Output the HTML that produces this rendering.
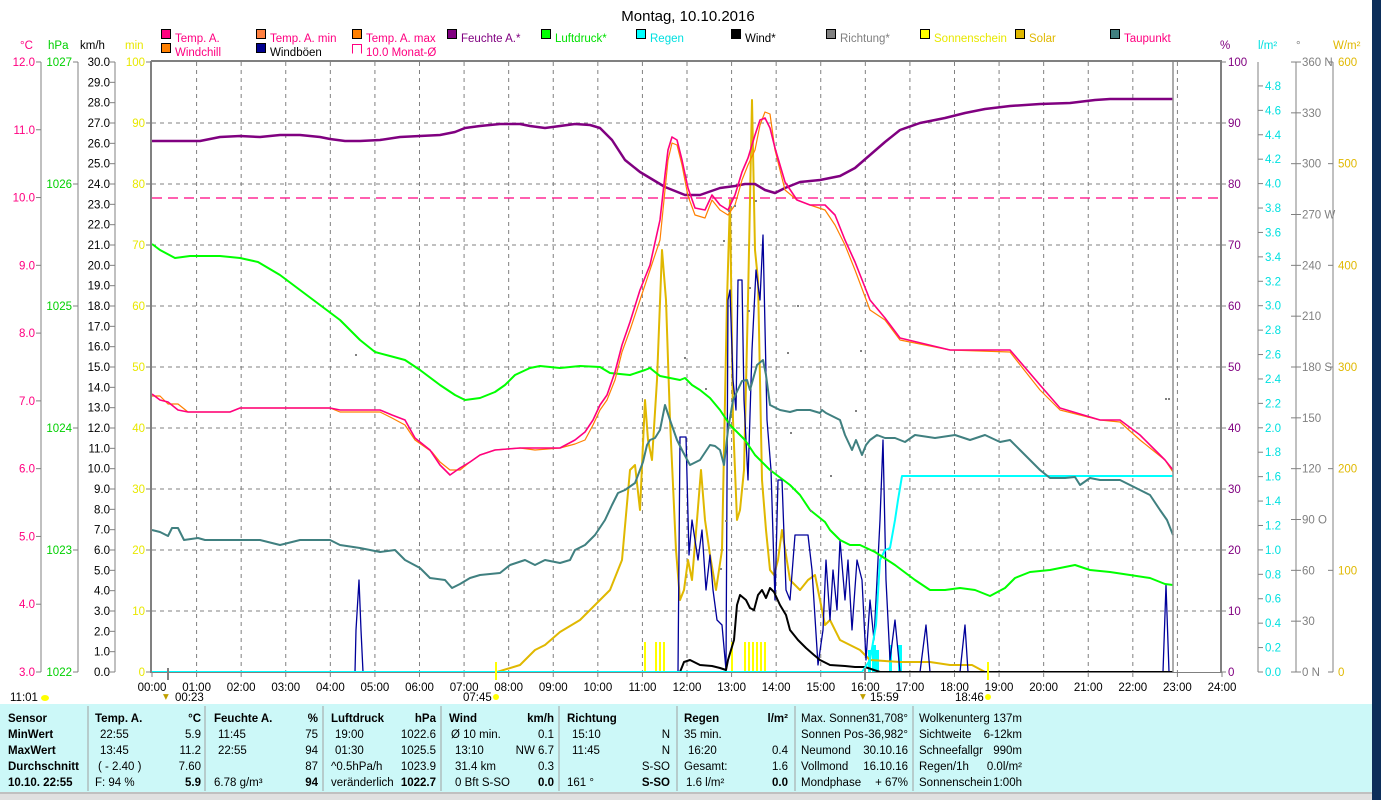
<!DOCTYPE html>
<html><head><meta charset="utf-8">
<style>
html,body{margin:0;padding:0;background:#fff;width:1381px;height:800px;overflow:hidden;font-family:"Liberation Sans",sans-serif}
svg{position:absolute;left:0;top:0}
text{font-family:"Liberation Sans",sans-serif;font-size:11.5px;white-space:pre}
</style></head><body>
<svg id="s" width="1381" height="800" xmlns="http://www.w3.org/2000/svg">
<rect x="0" y="0" width="1381" height="800" fill="#fff"/>
<g id="grid"></g>
<g id="axes"></g>
<text x="688" y="21" text-anchor="middle" style="font-size:15px">Montag, 10.10.2016</text>
<g id="leg"></g>
<line x1="152" y1="198" x2="1222" y2="198" stroke="#ff0080" stroke-width="1.3" stroke-dasharray="10,6"/>
<g fill="#ffff00">
<rect x="644" y="642" width="2" height="30"/><rect x="655" y="642" width="2" height="30"/><rect x="659" y="642" width="2" height="30"/><rect x="663" y="642" width="2" height="30"/>
<rect x="731" y="642" width="2" height="30"/><rect x="744" y="642" width="2" height="30"/><rect x="748" y="642" width="2" height="30"/><rect x="752" y="642" width="2" height="30"/><rect x="756" y="642" width="2" height="30"/><rect x="760" y="642" width="2" height="30"/><rect x="764" y="642" width="2" height="30"/>
</g>
<g fill="#00ffff">
<rect x="868" y="650" width="3" height="22"/><rect x="872" y="645" width="4" height="27"/><rect x="876" y="650" width="3" height="22"/><rect x="889" y="645" width="3" height="27"/><rect x="898" y="645" width="4" height="27"/>
</g>
<g fill="none" stroke-linejoin="round">
<polyline stroke="#e0b800" stroke-width="2" points="152,672 497,672 520,665 535,650 545,645 560,632 580,620 595,605 610,590 622,560 630,470 635,465 640,510 645,400 648,440 652,460 657,380 662,250 666,300 670,420 676,550 680,600 684,590 688,560 692,580 697,520 701,470 705,520 710,555 716,590 722,550 727,300 730,200 733,420 737,520 740,510 744,470 748,300 752,100 755,250 758,280 762,480 766,530 770,570 774,575 778,560 782,530 790,580 800,590 808,580 815,575 820,600 825,625 830,620 840,640 850,645 860,650 870,660 885,661 900,662 930,662 950,665 972,665 985,672 990,672"/>
<polyline stroke="#00009a" stroke-width="1.3" points="152,672 355,672 356,630 359,580 361,630 363,672 678,672 680,437 686,437 689,555 692,520 698,560 702,530 706,590 710,555 713,590 717,620 722,625 726,670 728,300 730,290 733,380 736,410 738,280 742,280 744,400 748,480 752,350 756,270 760,300 763,235 767,420 771,470 775,600 778,480 782,480 786,590 790,600 795,535 808,535 812,570 818,665 823,630 826,560 830,620 833,570 837,610 840,540 845,600 848,560 852,630 857,560 862,580 866,660 870,600 874,640 880,520 883,440 886,580 890,660 895,620 900,672 920,672 926,625 930,672 960,672 965,625 968,672 1163,672 1166,585 1169,672 1173,672"/>
<polyline stroke="#000" stroke-width="2" points="152,672 680,672 684,662 690,660 700,665 712,666 720,668 726,670 728,660 734,640 737,605 740,595 746,600 750,608 754,610 758,595 762,590 766,598 770,588 774,592 780,605 786,615 790,630 798,640 806,648 814,655 820,660 830,665 845,666 855,667 865,667 880,672 1173,672"/>
<polyline stroke="#00ffff" stroke-width="2" points="152,672 862,672 870,660 876,625 880,560 885,550 890,548 895,520 898,500 902,476 1173,476"/>
<polyline stroke="#00ff00" stroke-width="2" points="152,244 160,250 175,258 190,256 220,256 240,258 258,262 280,275 300,290 320,305 340,320 360,340 375,352 390,356 405,360 420,370 440,385 455,395 465,400 480,398 495,392 505,385 515,375 530,368 540,366 560,368 580,366 600,367 610,373 630,375 645,370 650,368 660,376 680,380 685,378 692,385 700,390 710,398 720,410 730,425 745,440 755,455 770,470 790,485 800,495 810,510 825,522 830,530 840,540 850,545 860,545 875,552 895,565 915,580 930,590 945,590 960,588 975,590 990,596 1005,588 1015,578 1030,572 1050,570 1060,568 1075,565 1090,570 1110,572 1130,575 1150,578 1165,584 1173,585"/>
<polyline stroke="#408080" stroke-width="2" points="152,530 160,532 168,536 172,528 178,528 184,540 198,538 205,540 230,540 260,540 280,545 300,540 320,540 330,540 340,545 360,548 380,552 395,550 405,560 420,568 430,578 445,580 452,588 460,584 470,578 480,575 500,573 510,565 525,560 535,565 545,560 560,563 570,560 575,550 585,545 595,535 605,520 612,505 618,493 625,490 635,483 643,462 647,445 650,440 655,438 660,430 665,405 670,420 677,440 683,452 690,465 700,460 710,445 715,446 720,450 724,465 728,430 733,400 742,381 747,380 750,390 757,365 763,360 766,375 770,405 780,410 790,412 797,410 810,410 820,413 822,410 826,413 840,420 845,435 852,450 856,440 862,455 866,445 870,440 877,435 885,438 895,438 905,442 915,435 935,438 955,435 970,440 985,435 1000,442 1010,440 1020,450 1030,460 1040,470 1050,478 1065,478 1075,477 1080,485 1090,478 1100,480 1120,480 1130,485 1140,490 1150,495 1160,510 1167,520 1173,535"/>
<polyline stroke="#800080" stroke-width="2.5" points="152,141 200,141 220,137 240,136 260,137 280,135 300,135 320,137 330,139 345,141 360,141 380,140 400,137 420,136 440,135 455,132 465,128 480,126 500,124 520,124 530,126 545,128 560,126 575,124 590,125 600,128 612,140 625,160 640,172 655,181 665,187 685,195 700,195 720,188 735,186 745,184 755,184 765,190 775,193 785,188 800,182 820,180 840,176 855,168 870,155 885,142 900,130 920,123 945,118 965,113 985,109 1010,106 1040,104 1070,103 1095,100 1110,99 1173,99"/>
<polyline stroke="#ff8000" stroke-width="1.2" points="152,396 160,396 168,404 178,404 188,412 230,412 240,408 280,408 330,408 340,412 380,412 392,418 405,425 415,440 432,452 440,462 450,470 460,470 470,462 480,455 495,450 520,448 535,450 560,448 575,444 585,440 593,425 600,410 607,400 615,380 622,352 630,330 640,300 650,270 660,240 665,190 668,160 672,143 677,145 682,165 688,196 695,215 705,218 712,200 720,210 728,215 735,205 742,180 748,165 755,150 760,125 765,112 770,114 775,150 785,190 797,200 810,205 825,210 835,225 845,245 855,270 870,310 885,320 900,340 950,350 1010,352 1040,390 1060,410 1100,420 1120,422 1140,440 1155,452 1165,460 1173,472"/>
<polyline stroke="#ff0080" stroke-width="1.6" points="152,394 160,400 168,402 178,410 188,412 230,412 240,408 280,408 330,408 340,410 380,410 392,415 405,420 415,438 430,450 440,465 450,475 460,468 470,462 480,455 495,450 520,448 535,448 560,448 575,440 585,432 593,420 600,405 607,395 615,372 622,345 630,322 640,290 650,265 660,220 665,175 668,150 672,137 677,140 682,160 688,188 695,208 705,210 712,195 720,205 728,210 735,195 742,172 748,158 755,135 760,120 765,118 770,128 775,148 785,182 797,200 810,205 825,205 835,215 845,240 855,262 870,300 885,318 900,338 950,350 1010,350 1040,385 1060,408 1100,420 1120,420 1140,435 1155,450 1165,460 1173,470"/>
</g>
<g fill="#808080" id="dots"></g>
<line x1="1173" y1="62" x2="1173" y2="672" stroke="#909090" stroke-width="1.5"/>
<line x1="151" y1="61" x2="1222" y2="61" stroke="#808080" stroke-width="2"/>
<line x1="151" y1="61" x2="151" y2="673" stroke="#808080" stroke-width="2"/>
<line x1="1221" y1="61" x2="1221" y2="673" stroke="#808080" stroke-width="2"/>
<line x1="151" y1="672.5" x2="1222" y2="672.5" stroke="#808080" stroke-width="1"/>
<line x1="168" y1="668" x2="168" y2="680" stroke="#808080" stroke-width="2"/>
<line x1="865" y1="668" x2="865" y2="680" stroke="#808080" stroke-width="2"/>
<line x1="496" y1="662" x2="496" y2="680" stroke="#ffff00" stroke-width="2"/>
<line x1="988" y1="662" x2="988" y2="680" stroke="#ffff00" stroke-width="2"/>
<text x="10" y="701">11:01</text><ellipse cx="45" cy="698" rx="4" ry="3" fill="#ffff00"/>
<text x="175" y="701">00:23</text><text x="163" y="700" fill="#c0a000">▾</text>
<text x="463" y="701">07:45</text><circle cx="496" cy="697" r="3" fill="#ffff00"/>
<text x="870" y="701">15:59</text><text x="860" y="700" fill="#c0a000">▾</text>
<text x="955" y="701">18:46</text><circle cx="988" cy="697" r="3" fill="#ffff00"/>
<rect x="0" y="704" width="1372" height="88" fill="#ccf8f8"/>
<g stroke="#a0a0a0" stroke-width="1">
<line x1="88" y1="706" x2="88" y2="791"/><line x1="205" y1="706" x2="205" y2="791"/><line x1="323" y1="706" x2="323" y2="791"/><line x1="441" y1="706" x2="441" y2="791"/><line x1="559" y1="706" x2="559" y2="791"/><line x1="677" y1="706" x2="677" y2="791"/><line x1="795" y1="706" x2="795" y2="791"/><line x1="913" y1="706" x2="913" y2="791"/>
</g>
<rect x="0" y="792" width="1372" height="8" fill="#e0e0e0"/>
<line x1="0" y1="793" x2="1372" y2="793" stroke="#a0a0a0"/>
<rect x="1372" y="0" width="9" height="800" fill="#0c2e5a"/>
<g id="tbl"></g>
</svg>
<script>
const NS="http://www.w3.org/2000/svg";
function el(p,t,a,tx){const e=document.createElementNS(NS,t);for(const k in a)e.setAttribute(k,a[k]);if(tx!==undefined)e.textContent=tx;document.getElementById(p).appendChild(e);return e;}
const X=h=>152+44.583*h;
for(let h=1;h<24;h++){el('grid','line',{x1:X(h),y1:62,x2:X(h),y2:672,stroke:'#808080','stroke-dasharray':'4,4'});}
for(let k=1;k<10;k++){el('grid','line',{x1:152,y1:62+61*k,x2:1221,y2:62+61*k,stroke:'#808080','stroke-dasharray':'4,4'});}
for(let h=0;h<=24;h++){const x=X(h);el('axes','line',{x1:x,y1:672,x2:x,y2:677,stroke:'#808080'});el('axes','text',{x:x,y:691,'text-anchor':'middle'},(h<10?'0':'')+h+':00');}
const G='#808080';
[[41],[78],[115]].forEach(a=>el('axes','line',{x1:a[0],y1:62,x2:a[0],y2:672,stroke:G}));
for(let t=3;t<=12;t++){const y=672-(t-3)*67.78;el('axes','line',{x1:36,y1:y,x2:41,y2:y,stroke:G});el('axes','text',{x:35,y:y+4,'text-anchor':'end',fill:'#ff0080'},t.toFixed(1));}
for(let p=1022;p<=1027;p++){const y=672-(p-1022)*122;el('axes','line',{x1:73,y1:y,x2:78,y2:y,stroke:G});el('axes','text',{x:72,y:y+4,'text-anchor':'end',fill:'#00d000'},p);}
for(let k=0;k<=30;k++){const y=672-k*20.333;el('axes','line',{x1:110,y1:y,x2:115,y2:y,stroke:G});el('axes','text',{x:110,y:y+4,'text-anchor':'end'},k.toFixed(1));}
for(let k=0;k<=10;k++){const y=672-k*61;el('axes','line',{x1:146,y1:y,x2:151,y2:y,stroke:G});el('axes','text',{x:145,y:y+4,'text-anchor':'end',fill:'#e8e800'},k*10);}
el('axes','line',{x1:1258,y1:62,x2:1258,y2:672,stroke:G});el('axes','line',{x1:1296,y1:62,x2:1296,y2:672,stroke:G});el('axes','line',{x1:1333,y1:62,x2:1333,y2:672,stroke:G});
for(let k=0;k<=10;k++){const y=672-k*61;el('axes','line',{x1:1221,y1:y,x2:1226,y2:y,stroke:G});el('axes','text',{x:1228,y:y+4,fill:'#800080'},k*10);}
for(let k=0;k<=24;k++){const y=672-k*24.42;el('axes','line',{x1:1258,y1:y,x2:1263,y2:y,stroke:G});el('axes','text',{x:1265,y:y+4,fill:'#00e0e0'},(k*0.2).toFixed(1));}
const dirs={0:'N',90:'O',180:'S',270:'W',360:'N'};
for(let d=0;d<=360;d+=30){const y=672-d*1.6944;el('axes','line',{x1:1291,y1:y,x2:1301,y2:y,stroke:G});el('axes','text',{x:1302,y:y+4,fill:'#808080'},d+(dirs[d]?' '+dirs[d]:''));}
for(let w=0;w<=600;w+=100){const y=672-w*1.0167;el('axes','line',{x1:1328,y1:y,x2:1333,y2:y,stroke:G});el('axes','text',{x:1338,y:y+4,fill:'#e0b800'},w);}
[[20,'°C','#ff0080'],[48,'hPa','#00d000'],[80,'km/h','#000'],[125,'min','#e8e800'],[1220,'%','#800080'],[1258,'l/m²','#00e0e0'],[1296,'°','#808080'],[1333,'W/m²','#e0b800']].forEach(u=>el('axes','text',{x:u[0],y:49,fill:u[2]},u[1]));
const L=[[161,38,'#ff0080','Temp. A.','#ff0080'],[256,38,'#ff8040','Temp. A. min','#ff0080'],[352,38,'#ff8000','Temp. A. max','#ff0080'],[447,38,'#800080','Feuchte A.*','#800080'],[541,38,'#00ff00','Luftdruck*','#00e000'],[636,38,'#00ffff','Regen','#00e0e0'],[731,38,'#000','Wind*','#000'],[826,38,'#808080','Richtung*','#808080'],[920,38,'#ffff00','Sonnenschein','#e8e800'],[1015,38,'#e0b800','Solar','#e0b800'],[1110,38,'#408080','Taupunkt','#ff0080'],[161,52,'#ff8000','Windchill','#ff0080'],[256,52,'#000090','Windböen','#000']];
L.forEach(l=>{el('leg','rect',{x:l[0]+0.5,y:l[1]-8.5,width:9,height:9,fill:l[2],stroke:'#000'});el('leg','text',{x:l[0]+14,y:l[1]+4,fill:l[4]},l[3]);});
el('leg','path',{d:'M352.5,53.5 V44.5 H361.5 V53.5',fill:'none',stroke:'#ff0080'});el('leg','text',{x:366,y:56,fill:'#ff0080'},'10.0 Monat-Ø');
[[355,354],[684,357],[705,388],[723,240],[728,210],[734,205],[748,310],[749,287],[755,200],[787,352],[797,305],[810,510],[830,475],[860,350],[855,410],[725,520],[720,568],[770,470],[790,432],[1165,398],[1168,398]].forEach(d=>el('dots','rect',{x:d[0],y:d[1],width:2,height:2}));
const T=[
[[8,'Sensor',1],[95,'Temp. A.',1],[201,'°C',1,1],[214,'Feuchte A.',1],[318,'%',1,1],[331,'Luftdruck',1],[436,'hPa',1,1],[449,'Wind',1],[554,'km/h',1,1],[567,'Richtung',1],[684,'Regen',1],[788,'l/m²',1,1],[801,'Max. Sonnen'],[908,'31,708°',0,1],[919,'Wolkenunterg'],[1022,'137m',0,1]],
[[8,'MinWert',1],[100,'22:55'],[201,'5.9',0,1],[218,'11:45'],[318,'75',0,1],[335,'19:00'],[436,'1022.6',0,1],[451,'Ø 10 min.'],[554,'0.1',0,1],[572,'15:10'],[670,'N',0,1],[684,'35 min.'],[801,'Sonnen Pos'],[908,'-36,982°',0,1],[919,'Sichtweite'],[1022,'6-12km',0,1]],
[[8,'MaxWert',1],[100,'13:45'],[201,'11.2',0,1],[218,'22:55'],[318,'94',0,1],[335,'01:30'],[436,'1025.5',0,1],[455,'13:10'],[554,'NW 6.7',0,1],[572,'11:45'],[670,'N',0,1],[688,'16:20'],[788,'0.4',0,1],[801,'Neumond'],[908,'30.10.16',0,1],[919,'Schneefallgr'],[1022,'990m',0,1]],
[[8,'Durchschnitt',1],[98,'( - 2.40 )'],[201,'7.60',0,1],[318,'87',0,1],[331,'^0.5hPa/h'],[436,'1023.9',0,1],[455,'31.4 km'],[554,'0.3',0,1],[670,'S-SO',0,1],[684,'Gesamt:'],[788,'1.6',0,1],[801,'Vollmond'],[908,'16.10.16',0,1],[919,'Regen/1h'],[1022,'0.0l/m²',0,1]],
[[8,'10.10. 22:55',1],[95,'F: 94 %'],[201,'5.9',1,1],[214,'6.78 g/m³'],[318,'94',1,1],[331,'veränderlich'],[436,'1022.7',1,1],[455,'0 Bft S-SO'],[554,'0.0',1,1],[567,'161 °'],[670,'S-SO',1,1],[686,'1.6 l/m²'],[788,'0.0',1,1],[801,'Mondphase'],[908,'+ 67%',0,1],[919,'Sonnenschein'],[1022,'1:00h',0,1]]];
T.forEach((r,i)=>r.forEach(c=>{const a={x:c[0],y:722+i*16};if(c[2])a['font-weight']='bold';if(c[3])a['text-anchor']='end';el('tbl','text',a,c[1]);}));
</script>
</body></html>
